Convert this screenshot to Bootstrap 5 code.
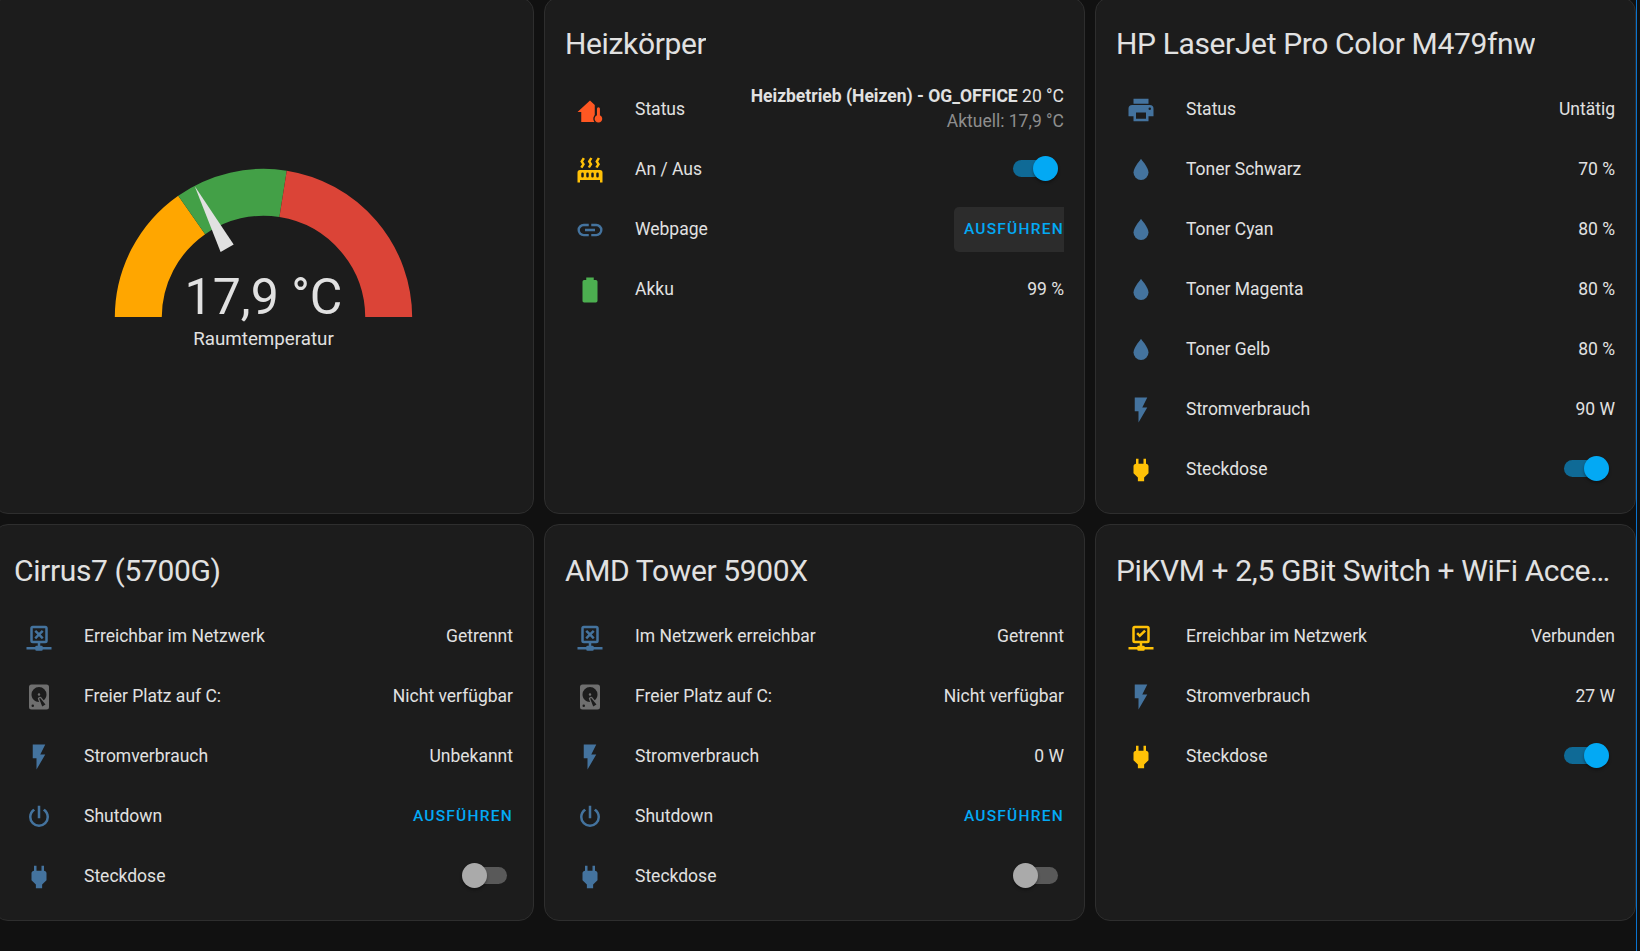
<!DOCTYPE html>
<html lang="de"><head><meta charset="utf-8"><title>Dashboard</title>
<link href="https://cdn.jsdelivr.net/npm/bootstrap@5.3.0/dist/css/bootstrap.min.css" rel="stylesheet">
<style>
html,body{height:100%;overflow:hidden;background:#111;}
body{font-family:Roboto,"Liberation Sans",sans-serif;font-size:17.5px;line-height:25px;color:#e1e1e1;}
.dash{display:grid;grid-template-columns:repeat(3,541px);grid-template-rows:517px 397px;gap:10px;margin:-3px 0 0 -7px;}
.tile{background:#1c1c1c;border:1px solid #2e2e2e;border-radius:15px;color:#e1e1e1;--bs-card-bg:#1c1c1c;}
.tile-head{height:86px;padding:6px 20px 0;font-size:30px;line-height:40px;letter-spacing:-.36px;display:flex;align-items:center;font-weight:400;margin:0;color:#e1e1e1;}
.tile-title{overflow:hidden;white-space:nowrap;text-overflow:ellipsis;}
.rows{display:flex;flex-direction:column;gap:10px;padding:0 20px;}
.line{height:50px;display:flex;align-items:center;}
.ic{width:50px;flex:none;display:flex;justify-content:center;margin-right:20px;}
.ic svg{width:30px;height:30px;fill:#44739e;display:block;margin-top:1px;}
.ic .yel{fill:#ffc107;} .ic .red{fill:#ff5722;} .ic .grn{fill:#4caf50;} .ic .gry{fill:#6f6f6f;}
.lbl{flex:1 1 auto;white-space:nowrap;}
.val{text-align:right;white-space:nowrap;}
.val b{font-weight:700;}
.sec{color:#8e8e8e;}
.run{--bs-btn-padding-x:0;--bs-btn-padding-y:0;border:0;border-radius:5px 0 0 5px;height:45px;color:#03a9f4;font-size:15.5px;font-weight:500;letter-spacing:1.25px;text-transform:uppercase;padding:0 0 0 10px;background:transparent;font-family:Roboto,sans-serif;line-height:45px;}
.run:hover{color:#03a9f4;}
.run-hover{background:#2c2c2c;}
.tog{position:relative;display:block;width:40px;height:17.5px;border-radius:9px;margin:0 6px 1px 0;background:#595959;}
.tog::after{content:"";position:absolute;width:25px;height:25px;border-radius:50%;top:-3.75px;left:-5px;background:#aaa;box-shadow:0 2px 3px rgba(0,0,0,.35);}
.tog.on{background:#0f6a96;margin-right:11px;}
.tog.on::after{left:20px;background:#03a9f4;}
.gauge-body{height:100%;display:flex;flex-direction:column;align-items:center;justify-content:center;padding-top:1px;}
.dial{position:relative;width:313px;height:156.5px;}
.dial svg{display:block;width:313px;height:156.5px;}
.dial-val{position:absolute;left:0;right:0;bottom:-9px;text-align:center;font-size:50px;line-height:58px;font-weight:400;}
.dial-lbl{margin-top:9.5px;font-size:18.75px;line-height:25px;}
.edge{position:fixed;top:0;bottom:0;left:1636px;width:1px;background:#0a74d0;}
</style></head><body>
<svg width="0" height="0" class="d-none"><defs>
<path id="i-water" d="M12,20A6,6 0 0,1 6,14C6,10 12,3.25 12,3.25C12,3.25 18,10 18,14A6,6 0 0,1 12,20Z"/>
<path id="i-flash" d="M7,2V13H10V22L17,10H13L17,2H7Z"/>
<path id="i-plug" d="M16,7V3H14V7H10V3H8V7H8C7,7 6,8 6,9V14.5L9.5,18V21H14.5V18L18,14.5V9C18,8 17,7 16,7Z"/>
<path id="i-disk" fill-rule="evenodd" d="M6,2H18A2,2 0 0,1 20,4V20A2,2 0 0,1 18,22H6A2,2 0 0,1 4,20V4A2,2 0 0,1 6,2M12,4A6,6 0 0,0 6,10C6,13.31 8.69,16 12.1,16L11.22,13.77C10.95,13.29 11.11,12.68 11.59,12.4L12.45,11.9C12.93,11.63 13.54,11.79 13.82,12.27L15.74,14.69C17.12,13.59 18,11.9 18,10A6,6 0 0,0 12,4M12,9A1,1 0 0,1 13,10A1,1 0 0,1 12,11A1,1 0 0,1 11,10A1,1 0 0,1 12,9M7,18A1,1 0 0,0 6,19A1,1 0 0,0 7,20A1,1 0 0,0 8,19A1,1 0 0,0 7,18M12.09,13.27L14.58,19.58L17.17,18.08L12.95,12.77L12.09,13.27Z"/>
<path id="i-power" d="M16.56,5.44L15.11,6.89C16.84,7.94 18,9.83 18,12A6,6 0 0,1 12,18A6,6 0 0,1 6,12C6,9.83 7.16,7.94 8.88,6.88L7.44,5.44C5.36,6.88 4,9.28 4,12A8,8 0 0,0 12,20A8,8 0 0,0 20,12C20,9.28 18.64,6.88 16.56,5.44M13,3H11V13H13"/>
<path id="i-net" fill-rule="evenodd" d="M15,20A1,1 0 0,0 14,19H13V17H17A2,2 0 0,0 19,15V5A2,2 0 0,0 17,3H7A2,2 0 0,0 5,5V15A2,2 0 0,0 7,17H11V19H10A1,1 0 0,0 9,20H2V22H9A1,1 0 0,0 10,23H14A1,1 0 0,0 15,22H22V20H15M7,15V5H17V15H7Z"/>
<path id="i-x" d="M9.7,6.3L12,8.6L14.3,6.3L15.7,7.7L13.4,10L15.7,12.3L14.3,13.7L12,11.4L9.7,13.7L8.3,12.3L10.6,10L8.3,7.7Z"/>
<path id="i-check" d="M8.2,9.6L9.6,8.2L11,9.6L14.6,6.2L16,7.6L11,12.4Z"/>
</defs></svg>

<main class="dash">
  <section class="card tile">
    <div class="gauge-body">
      <div class="dial">
        <svg viewBox="-50 -50 100 50" aria-hidden="true">
          <g fill="none" stroke-width="15">
            <path d="M-40,0A40,40 0 0 1 -22.94,-32.77" stroke="#ffa600"/>
            <path d="M-22.94,-32.77A40,40 0 0 1 6.26,-39.51" stroke="#43a047"/>
            <path d="M6.26,-39.51A40,40 0 0 1 40,0" stroke="#db4437"/>
          </g>
          <polygon points="-21.96,-41.9 -13.7,-20.9 -9.53,-23.3" fill="#e1e1e1"/>
        </svg>
        <div class="dial-val">17,9 °C</div>
      </div>
      <div class="dial-lbl">Raumtemperatur</div>
    </div>
  </section>

  <section class="card tile">
    <h1 class="tile-head"><span class="tile-title">Heizkörper</span></h1>
    <div class="rows">
      <div class="line"><span class="ic"><svg viewBox="0 0 24 24"><path class="red" d="M2,13.6L12,4.3L15.8,7.9V21.6H5V13.6Z"/><path class="red" stroke="#1c1c1c" stroke-width="1.1" d="M17,15.9V10.9A1.75,1.75 0 0 1 20.5,10.9V15.9A3.6,3.6 0 1 1 17,15.9Z"/></svg></span><span class="lbl">Status</span>
        <span class="val"><b>Heizbetrieb (Heizen) - OG_OFFICE</b> 20 °C<br><span class="sec">Aktuell: 17,9 °C</span></span></div>
      <div class="line"><span class="ic"><svg viewBox="0 0 24 24"><path class="yel" fill-rule="evenodd" d="M7.95,3L6.53,5.19L7.95,7.4H7.94L5.95,10.5L4.22,9.6L5.64,7.39L4.22,5.19L6.22,2.09L7.95,3M13.95,2.89L12.53,5.1L13.95,7.3L13.94,7.31L11.95,10.4L10.22,9.5L11.64,7.3L10.22,5.1L12.22,2L13.95,2.89M20,2.89L18.56,5.1L20,7.3V7.31L18,10.4L16.25,9.5L17.67,7.3L16.25,5.1L18.25,2L20,2.89M2,22V14A2,2 0 0,1 4,12H20A2,2 0 0,1 22,14V22H20V20H4V22H2M6,14A1,1 0 0,0 5,15V17A1,1 0 0,0 6,18A1,1 0 0,0 7,17V15A1,1 0 0,0 6,14M10,14A1,1 0 0,0 9,15V17A1,1 0 0,0 10,18A1,1 0 0,0 11,17V15A1,1 0 0,0 10,14M14,14A1,1 0 0,0 13,15V17A1,1 0 0,0 14,18A1,1 0 0,0 15,17V15A1,1 0 0,0 14,14M18,14A1,1 0 0,0 17,15V17A1,1 0 0,0 18,18A1,1 0 0,0 19,17V15A1,1 0 0,0 18,14Z"/></svg></span><span class="lbl">An / Aus</span><span class="tog on"></span></div>
      <div class="line"><span class="ic"><svg viewBox="0 0 24 24"><path d="M3.9,12C3.9,10.29 5.29,8.9 7,8.9H11V7H7A5,5 0 0,0 2,12A5,5 0 0,0 7,17H11V15.1H7C5.29,15.1 3.9,13.71 3.9,12M8,13H16V11H8V13M17,7H13V8.9H17C18.71,8.9 20.1,10.29 20.1,12C20.1,13.71 18.71,15.1 17,15.1H13V17H17A5,5 0 0,0 22,12A5,5 0 0,0 17,7Z"/></svg></span><span class="lbl">Webpage</span><button class="btn run run-hover" type="button">Ausführen</button></div>
      <div class="line"><span class="ic"><svg viewBox="0 0 24 24"><path class="grn" d="M16.67,4H15V2H9V4H7.33A1.33,1.33 0 0,0 6,5.33V20.67C6,21.4 6.6,22 7.33,22H16.67A1.33,1.33 0 0,0 18,20.67V5.33C18,4.6 17.4,4 16.67,4Z"/></svg></span><span class="lbl">Akku</span><span class="val">99 %</span></div>
    </div>
  </section>

  <section class="card tile">
    <h1 class="tile-head"><span class="tile-title">HP LaserJet Pro Color M479fnw</span></h1>
    <div class="rows">
      <div class="line"><span class="ic"><svg viewBox="0 0 24 24"><path d="M18,3H6V7H18M19,12A1,1 0 0,1 18,11A1,1 0 0,1 19,10A1,1 0 0,1 20,11A1,1 0 0,1 19,12M16,19H8V14H16M19,8H5A3,3 0 0,0 2,11V17H6V21H18V17H22V11A3,3 0 0,0 19,8Z"/></svg></span><span class="lbl">Status</span><span class="val">Untätig</span></div>
      <div class="line"><span class="ic"><svg viewBox="0 0 24 24"><use href="#i-water"/></svg></span><span class="lbl">Toner Schwarz</span><span class="val">70 %</span></div>
      <div class="line"><span class="ic"><svg viewBox="0 0 24 24"><use href="#i-water"/></svg></span><span class="lbl">Toner Cyan</span><span class="val">80 %</span></div>
      <div class="line"><span class="ic"><svg viewBox="0 0 24 24"><use href="#i-water"/></svg></span><span class="lbl">Toner Magenta</span><span class="val">80 %</span></div>
      <div class="line"><span class="ic"><svg viewBox="0 0 24 24"><use href="#i-water"/></svg></span><span class="lbl">Toner Gelb</span><span class="val">80 %</span></div>
      <div class="line"><span class="ic"><svg viewBox="0 0 24 24"><use href="#i-flash"/></svg></span><span class="lbl">Stromverbrauch</span><span class="val">90 W</span></div>
      <div class="line"><span class="ic"><svg viewBox="0 0 24 24"><use class="yel" href="#i-plug"/></svg></span><span class="lbl">Steckdose</span><span class="tog on"></span></div>
    </div>
  </section>

  <section class="card tile">
    <h1 class="tile-head"><span class="tile-title">Cirrus7 (5700G)</span></h1>
    <div class="rows">
      <div class="line"><span class="ic"><svg viewBox="0 0 24 24"><use href="#i-net"/><use href="#i-x"/></svg></span><span class="lbl">Erreichbar im Netzwerk</span><span class="val">Getrennt</span></div>
      <div class="line"><span class="ic"><svg viewBox="0 0 24 24"><use class="gry" href="#i-disk"/></svg></span><span class="lbl">Freier Platz auf C:</span><span class="val">Nicht verfügbar</span></div>
      <div class="line"><span class="ic"><svg viewBox="0 0 24 24"><use href="#i-flash"/></svg></span><span class="lbl">Stromverbrauch</span><span class="val">Unbekannt</span></div>
      <div class="line"><span class="ic"><svg viewBox="0 0 24 24"><use href="#i-power"/></svg></span><span class="lbl">Shutdown</span><button class="btn run" type="button">Ausführen</button></div>
      <div class="line"><span class="ic"><svg viewBox="0 0 24 24"><use href="#i-plug"/></svg></span><span class="lbl">Steckdose</span><span class="tog"></span></div>
    </div>
  </section>

  <section class="card tile">
    <h1 class="tile-head"><span class="tile-title">AMD Tower 5900X</span></h1>
    <div class="rows">
      <div class="line"><span class="ic"><svg viewBox="0 0 24 24"><use href="#i-net"/><use href="#i-x"/></svg></span><span class="lbl">Im Netzwerk erreichbar</span><span class="val">Getrennt</span></div>
      <div class="line"><span class="ic"><svg viewBox="0 0 24 24"><use class="gry" href="#i-disk"/></svg></span><span class="lbl">Freier Platz auf C:</span><span class="val">Nicht verfügbar</span></div>
      <div class="line"><span class="ic"><svg viewBox="0 0 24 24"><use href="#i-flash"/></svg></span><span class="lbl">Stromverbrauch</span><span class="val">0 W</span></div>
      <div class="line"><span class="ic"><svg viewBox="0 0 24 24"><use href="#i-power"/></svg></span><span class="lbl">Shutdown</span><button class="btn run" type="button">Ausführen</button></div>
      <div class="line"><span class="ic"><svg viewBox="0 0 24 24"><use href="#i-plug"/></svg></span><span class="lbl">Steckdose</span><span class="tog"></span></div>
    </div>
  </section>

  <section class="card tile">
    <h1 class="tile-head"><span class="tile-title">PiKVM + 2,5 GBit Switch + WiFi Acce…</span></h1>
    <div class="rows">
      <div class="line"><span class="ic"><svg viewBox="0 0 24 24"><use class="yel" href="#i-net"/><use class="yel" href="#i-check"/></svg></span><span class="lbl">Erreichbar im Netzwerk</span><span class="val">Verbunden</span></div>
      <div class="line"><span class="ic"><svg viewBox="0 0 24 24"><use href="#i-flash"/></svg></span><span class="lbl">Stromverbrauch</span><span class="val">27 W</span></div>
      <div class="line"><span class="ic"><svg viewBox="0 0 24 24"><use class="yel" href="#i-plug"/></svg></span><span class="lbl">Steckdose</span><span class="tog on"></span></div>
    </div>
  </section>
</main>
<div class="edge"></div>
<script src="https://cdn.jsdelivr.net/npm/bootstrap@5.3.0/dist/js/bootstrap.bundle.min.js"></script>
</body></html>
